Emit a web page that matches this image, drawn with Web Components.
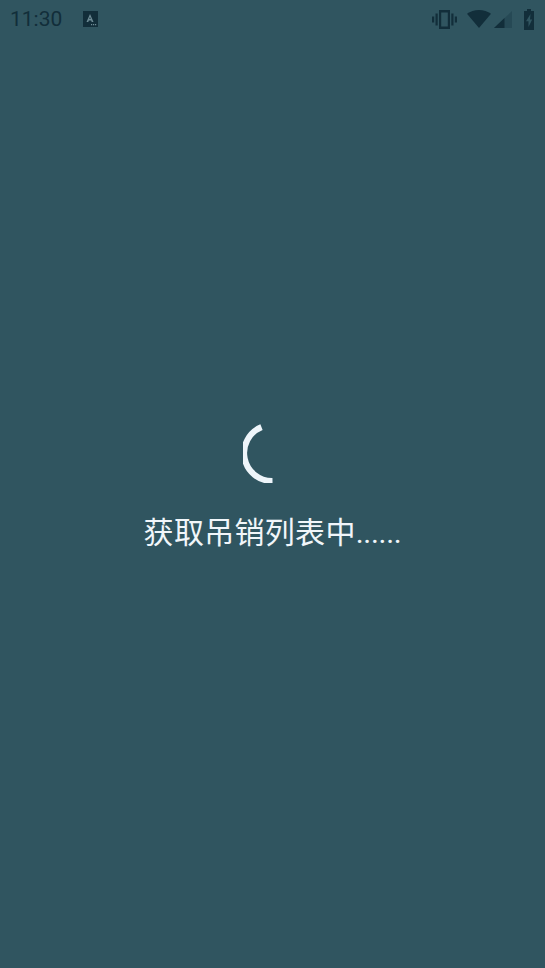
<!DOCTYPE html>
<html lang="zh"><head><meta charset="utf-8"><title>获取吊销列表中</title>
<style>html,body{margin:0;height:100%;background:#305560}</style></head>
<body><app-screen></app-screen>
<script>
class StatusBar extends HTMLElement{constructor(){super();this.attachShadow({mode:'open'}).innerHTML=`
<style>:host{display:flex;align-items:center;height:38px;padding:0 11px 0 10px;box-sizing:border-box;color:#122e3a;font:21px/38px Roboto,"Noto Sans",sans-serif}
.time{width:73px}.sp{flex:1}svg{display:block;fill:currentColor}
.r{display:flex;align-items:center}</style>
<span class="time">11:30</span>
<svg width="15" height="16" viewBox="0 0 15 16"><path d="M0 0h15v16H0z"/><path fill="#6f8c96" d="M7 3 3.500 11h1.800l.5-1.500h2.400l.5 1.500h1.800zM7 5.800l.7 2.200H6.300z" fill-rule="evenodd"/><path fill="#6f8c96" d="M8 13h1.200v1.200H8zM10 13h1.200v1.200H10zM12 13h1.200v1.200H12z"/></svg>
<span class="sp"></span>
<div class="r">
<svg width="25" height="19" viewBox="0 0 25 19" style="margin-right:10px"><path fill-rule="evenodd" d="M7 0h11v19H7zM9.200 2.500v14h6.600v-14z"/><path d="M3.500 3.500h2.200v12H3.500zM19.300 3.500h2.200v12h-2.200zM0 6.500h2.200v6H0zM22.800 6.500H25v6h-2.200z"/></svg>
<svg width="24" height="18" viewBox="0 0 24 18" style="margin-right:3px"><path d="M0 3.800C3.300 1.300 7.400 0 12 0s8.700 1.300 12 3.800L12 18z"/></svg>
<svg width="18" height="17" viewBox="0 0 18 17" style="margin-right:12px"><path d="M0 17 18 0v17z" opacity=".3"/><path d="M0 17l10.500-10v10z"/></svg>
<svg width="10" height="21" viewBox="0 0 10 21"><path fill-rule="evenodd" d="M3 0h4v2h3v19H0V2h3zM6.500 5 2 12.200h2.500V18L8.200 10.500H6z"/></svg>
</div>`}}
class LoadingSpinner extends HTMLElement{constructor(){super();this.attachShadow({mode:'open'}).innerHTML=`
<style>:host{display:block;width:60px;height:60px}svg{display:block}</style>
<svg width="60" height="60" viewBox="0 0 60 60"><path d="M18.500 4.100A28 28 0 0 0 29.500 58" fill="none" stroke="#eef5fa" stroke-width="6"/></svg>`}}
class LoadingMessage extends HTMLElement{constructor(){super();this.attachShadow({mode:'open'}).innerHTML=`
<style>:host{display:flex;flex-direction:column;align-items:center;gap:28px}
p{margin:0;color:#f1f6fa;font:30px/44px Roboto,"Noto Sans CJK SC",sans-serif;white-space:nowrap;letter-spacing:.3px}
::slotted(span){letter-spacing:-.3px}</style>
<slot name="spinner"></slot><p><slot></slot></p>`}}
class AppScreen extends HTMLElement{constructor(){super();this.attachShadow({mode:'open'}).innerHTML=`
<style>:host{display:flex;flex-direction:column;height:968px;overflow:hidden;background:#305560}
main{flex:1;display:flex;align-items:center;justify-content:center;padding-bottom:29px}</style>
<status-bar></status-bar>
<main><loading-message><loading-spinner slot="spinner"></loading-spinner>获取吊销列表中<span>......</span></loading-message></main>`}}
customElements.define('status-bar',StatusBar);
customElements.define('loading-spinner',LoadingSpinner);
customElements.define('loading-message',LoadingMessage);
customElements.define('app-screen',AppScreen);
</script></body></html>
